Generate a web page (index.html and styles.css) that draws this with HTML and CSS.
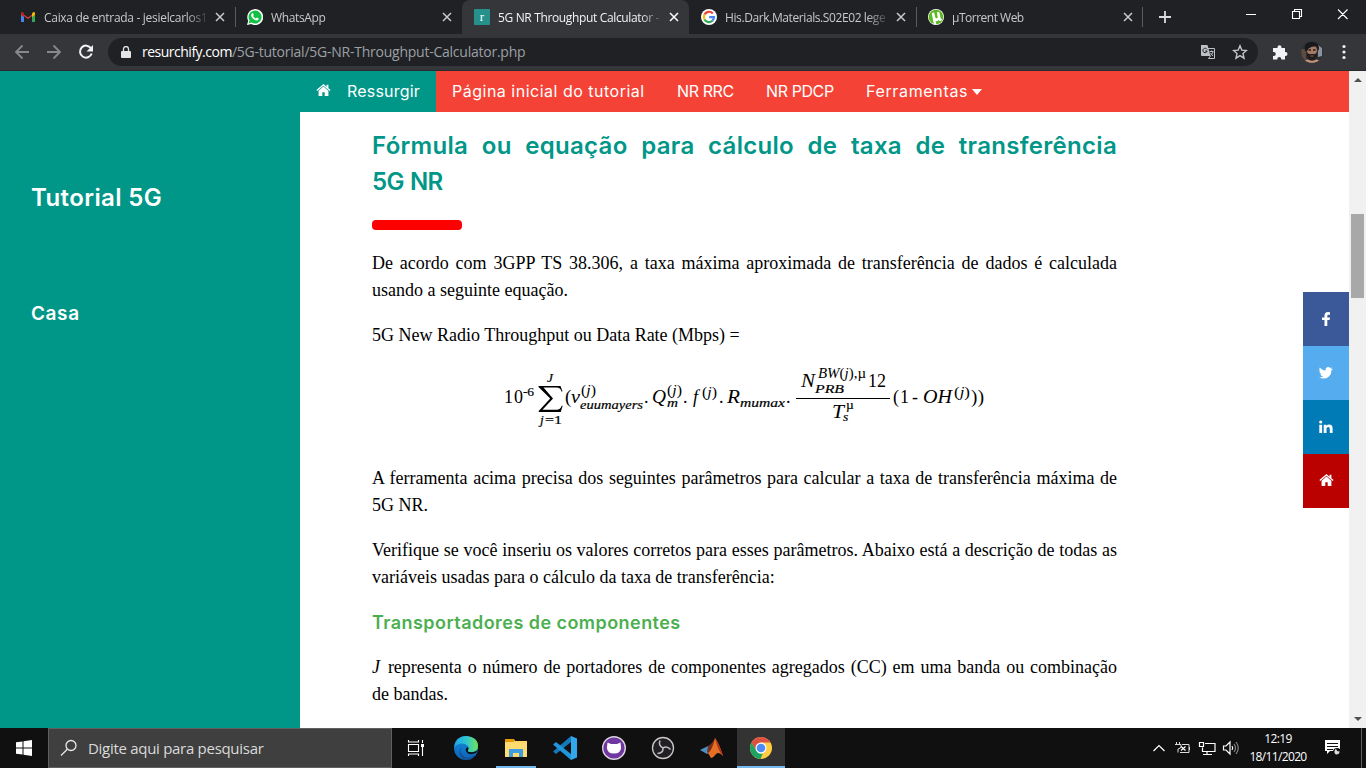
FILE: index.html
```html
<!DOCTYPE html>
<html lang="pt-BR">
<head>
<meta charset="utf-8">
<title>5G NR Throughput Calculator</title>
<link rel="stylesheet" href="styles.css">
</head>
<body>
<div class="screen">
  <header class="tabstrip">
    <div class="tab">
      <svg class="fav" viewBox="0 0 16 16"><path d="M1.500 4v9H4V7l4 3 4-3v6h2.500V4L8 8.500z" fill="#ea4335"/><path d="M1 4v9h3V6z" fill="#4285f4"/><path d="M12 6v7h3V4z" fill="#34a853"/><path d="M12 4.500V8l3-2.300V4q-1-2-3 .5z" fill="#fbbc04"/><path d="M1 4v1.700L4 8V4.500Q2 2 1 4z" fill="#c5221f"/></svg>
      <span class="title t1">Caixa de entrada - jesielcarlos1</span>
      <svg class="x" viewBox="0 0 10 10"><path d="M1 1l8 8M9 1L1 9"/></svg>
    </div>
    <div class="tab sep">
      <svg class="fav" viewBox="0 0 16 16"><path d="M0 16l1.200-4.200A8 8 0 1 1 4.300 15z" fill="#fff"/><path d="M1.600 14.400l.9-3a6.500 6.500 0 1 1 2.200 2.200z" fill="#12c143"/><path d="M5 4.200q.8-.6 1.200.2l.6 1.500-.7 1q1 1.900 2.800 2.600l.9-1 1.900 1q.2 1.800-1.700 2-3.400-.1-5.700-4Q3.700 5.700 5 4.200z" fill="#fff"/></svg>
      <span class="title t2">WhatsApp</span>
      <svg class="x" viewBox="0 0 10 10"><path d="M1 1l8 8M9 1L1 9"/></svg>
    </div>
    <div class="tab active">
      <span class="fav fav-r">r</span>
      <span class="title t3">5G NR Throughput Calculator -</span>
      <svg class="x" viewBox="0 0 10 10"><path d="M1 1l8 8M9 1L1 9"/></svg>
    </div>
    <div class="tab">
      <svg class="fav" viewBox="0 0 16 16"><circle cx="8" cy="8" r="8" fill="#fff"/><g fill="none" stroke-width="2.200"><path d="M11.800 4.400A5.100 5.100 0 0 0 3.500 5.600" stroke="#ea4335"/><path d="M3.500 5.600a5.100 5.100 0 0 0 0 4.900" stroke="#fbbc05"/><path d="M3.500 10.500a5.100 5.100 0 0 0 7.900 1.300" stroke="#34a853"/><path d="M11.400 11.800Q13 10.200 13 8.100H8.200" stroke="#4285f4"/></g></svg>
      <span class="title t4">His.Dark.Materials.S02E02 lege</span>
      <svg class="x" viewBox="0 0 10 10"><path d="M1 1l8 8M9 1L1 9"/></svg>
    </div>
    <div class="tab sep last">
      <svg class="fav" viewBox="0 0 16 16"><circle cx="8" cy="8" r="8" fill="#fff"/><circle cx="8" cy="8" r="7.300" fill="#5cb821"/><path d="M3.700 4l2.500-.5 1 4.500q.4 1.700 1.800 1.200.9-.4.600-1.800L8.800 3.200l2.400-.5L12.600 9q.3 1.300 1.500.8l-.8 2q-1.800.8-2.700-.7-1 1.500-3 1.200l.7 3-2.400.1z" fill="#fff"/></svg>
      <span class="title t5">µTorrent Web</span>
      <svg class="x" viewBox="0 0 10 10"><path d="M1 1l8 8M9 1L1 9"/></svg>
    </div>
    <svg class="plus" viewBox="0 0 12 12"><path d="M6 0v12M0 6h12"/></svg>
    <svg class="winctl" viewBox="-1 0 140 34"><path d="M19 14.500h10M65.500 11.500h7v7h-7zM67.500 11.500v-2h7v7h-2M111 9.500l9.500 9.500M120.500 9.500l-9.500 9.500"/></svg>
  </header>
  <div class="toolbar">
    <svg class="navicons" viewBox="0 0 108 36"><g fill="none" stroke-width="1.800"><path d="M29 18H16.500M22.500 11.500L16 18l6.500 6.500M47 18h12.500M53.500 11.500L60 18l-6.500 6.500" stroke="#87888b"/><path d="M91 14.300a6 6 0 1 0 .7 5.200" stroke="#f1f3f4" stroke-width="2"/></g><path d="M93 11v6.500h-6.500z" fill="#f1f3f4"/></svg>
    <div class="omnibox">
      <svg class="lock" viewBox="0 0 10 12"><path d="M1 5h8q1 0 1 1v5q0 1-1 1H1q-1 0-1-1V6q0-1 1-1z" fill="#e3e4e6"/><path d="M2.500 5V3a2.500 2.500 0 0 1 5 0v2" fill="none" stroke="#e3e4e6" stroke-width="1.300"/></svg>
      <span class="url"><span class="host">resurchify.com</span><span class="path">/5G-tutorial/5G-NR-Throughput-Calculator.php</span></span>
      <svg class="translate" viewBox="0 0 16 16"><path d="M6 4.500h8.500v10H8.500" fill="none" stroke="#bdc1c6"/><path d="M1 1h6.500l3 11H2q-1 0-1-1z" fill="#bdc1c6"/><path d="M7 5.400A2.200 2.200 0 1 0 7.200 7H5.200" stroke="#202124" fill="none"/><path d="M9.500 7.500h4M11.500 6.500v1M13 8q-.5 2-2.500 3.500M10.500 9l2.500 3M10.500 12l-2 2.500" fill="none" stroke="#bdc1c6"/></svg>
      <svg class="star" viewBox="0 0 16 16"><path d="M8 1.800l1.800 4.300 4.700.4L11 9.600l1 4.600-4-2.500-4 2.500 1-4.600-3.500-3.100 4.700-.4z" fill="none" stroke="#c4c6c9" stroke-width="1.400"/></svg>
    </div>
    <svg class="ext" viewBox="0 0 16 16"><path d="M1.500 4h4v-.7a2 2 0 0 1 4 0V4H13v4h.5a2 2 0 0 1 0 4H13v3.500H9.300V15a2 2 0 0 0-4 0v.5H1V12h.8a2 2 0 0 0 0-4H1V4z" fill="#f1f3f4"/></svg>
    <svg class="avatar" viewBox="0 0 22 22"><defs><clipPath id="round"><circle cx="11" cy="11" r="10.800"/></clipPath></defs><g clip-path="url(#round)"><path fill="#2c3035" d="M0 0h22v22H0z"/><path d="M17 4l4 3v8l-4 1z" fill="#8b939e"/><path d="M0 8h5v11H0z" fill="#5d4b40"/><ellipse cx="11" cy="9.500" rx="5" ry="6.500" fill="#a77b62"/><path d="M4 10Q2 1 11 1q8 0 7 9-2-4-3-4.500Q8 5 6 10z" fill="#16181b"/><path d="M6 11q1 2.500 3 2h4q2 .5 3-2 1 8-5 8.500-6-.5-5-8.500z" fill="#221e1d"/><path d="M7.500 9h2.500M12 9h2.500" stroke="#241c1a" stroke-width="1.300"/><path d="M9.500 15h3" stroke="#8d6152"/><path d="M2 22q2-4 5-3.500 4 2.500 8 0 4 0 5 3.500z" fill="#c69476"/></g></svg>
    <svg class="dots" viewBox="0 0 4 16"><circle cx="2" cy="2.500" r="1.600"/><circle cx="2" cy="8" r="1.600"/><circle cx="2" cy="13.500" r="1.600"/></svg>
  </div>
  <div class="viewport">
    <aside class="sidebar"><h2>Tutorial 5G</h2><h3>Casa</h3></aside>
    <main class="page">
      <nav class="menu">
        <a class="home"><svg viewBox="0 0 16 14"><path d="M8 2.700L2.700 7.300V13h4V9h2.600v4h4V7.300z"/><path d="M8 0L.3 6.500l1 1L8 1.900l6.700 5.600 1-1L13.300 4.500V.8h-2V2.900z"/></svg><span>Ressurgir</span></a>
        <a class="n1">Página inicial do tutorial</a><a class="n2">NR RRC</a><a class="n3">NR PDCP</a><a class="n4"><span>Ferramentas</span><i class="caret"></i></a>
      </nav>
      <article class="content">
        <h2 class="headline">Fórmula ou equação para cálculo de taxa de transferência <span class="short">5G NR</span></h2>
        <div class="rule"></div>
        <p>De acordo com 3GPP TS 38.306, a taxa máxima aproximada de transferência de dados é calculada usando a seguinte equação.</p>
        <p>5G New Radio Throughput ou Data Rate (Mbps) =</p>
        <svg class="formula" viewBox="372 349 745 98">
          <text x="504" y="403" textLength="19">10</text><text class="s" x="523" y="396" textLength="11">-6</text>
          <text class="i s" x="547" y="382">J</text>
          <path d="M538.500 386h22l2 5.500h-1q-1-4-5-4h-13l9.500 11-10.500 11.300h14q4 0 5.200-4h1l-2 6.200h-22v-1l11.500-12.500-11.700-11.500z"/>
          <text class="i s" x="540" y="424">j</text><text class="s" x="545" y="424" textLength="17" lengthAdjust="spacingAndGlyphs">=1</text>
          <text class="p" x="565" y="403">(</text><text class="i" x="571" y="403" textLength="9" lengthAdjust="spacingAndGlyphs">v</text>
          <text class="u" x="581" y="395" textLength="15" lengthAdjust="spacingAndGlyphs">(<tspan class="i">j</tspan>)</text>
          <text class="i s" x="580" y="409" textLength="63" lengthAdjust="spacingAndGlyphs">euumayers</text><text x="644" y="403">.</text>
          <text class="i" x="652" y="403" textLength="14" lengthAdjust="spacingAndGlyphs">Q</text><text class="u" x="667" y="395" textLength="15" lengthAdjust="spacingAndGlyphs">(<tspan class="i">j</tspan>)</text><text class="i s" x="667" y="407" textLength="11" lengthAdjust="spacingAndGlyphs">m</text><text x="683" y="403">.</text>
          <text class="i" x="693" y="403">f</text><text class="u" x="702" y="397" textLength="15" lengthAdjust="spacingAndGlyphs">(<tspan class="i">j</tspan>)</text><text x="719" y="403">.</text>
          <text class="i" x="727" y="403" textLength="13" lengthAdjust="spacingAndGlyphs">R</text><text class="i s" x="740" y="407" textLength="45" lengthAdjust="spacingAndGlyphs">mumax</text><text x="786" y="403">.</text>
          <text class="i" x="801" y="387" textLength="14" lengthAdjust="spacingAndGlyphs">N</text><text class="u" x="818" y="378" textLength="48" lengthAdjust="spacingAndGlyphs"><tspan class="i">BW</tspan>(<tspan class="i">j</tspan>),µ</text><text class="i s" x="815" y="393" textLength="29" lengthAdjust="spacingAndGlyphs">PRB</text><text x="868" y="387" textLength="18">12</text>
          <path d="M796 398h94v1h-94z"/>
          <text class="i" x="832" y="418" textLength="12" lengthAdjust="spacingAndGlyphs">T</text><text class="s" x="846" y="409">µ</text><text class="i s" x="843" y="421">s</text>
          <text x="893" y="403" textLength="16">(1</text><text x="912" y="403">-</text><text class="i" x="923" y="403" textLength="29" lengthAdjust="spacingAndGlyphs">OH</text><text class="u" x="954" y="397" textLength="16" lengthAdjust="spacingAndGlyphs">(<tspan class="i">j</tspan>)</text><text class="p" x="971" y="403" textLength="13">))</text>
        </svg>
        <p>A ferramenta acima precisa dos seguintes parâmetros para calcular a taxa de transferência máxima de 5G NR.</p>
        <p>Verifique se você inseriu os valores corretos para esses parâmetros. Abaixo está a descrição de todas as variáveis usadas para o cálculo da taxa de transferência:</p>
        <h3>Transportadores de componentes</h3>
        <p><em>J</em> representa o número de portadores de componentes agregados (CC) em uma banda ou combinação de bandas.</p>
      </article>
    </main>
    <div class="social">
      <a class="fb"><svg viewBox="0 0 16 16"><path d="M12 1.200v2.500h-1.500q-1.200 0-1.200 1.100v1.600H12l-.4 2.500H9.300V15H6.500V8.900H4V6.400h2.500V4.500Q6.500 1 10 1z"/></svg></a>
      <a class="tw"><svg viewBox="0 0 16 16"><path d="M15 3.700q-.6.900-1.500 1.500.1 4-2.800 6.500Q6.500 15 1 12.400q2.500.1 4-1.200-2-.2-2.700-2l1.200-.1Q1.400 8.400 1.300 6.100l1.200.3Q.5 4.800 1.700 2.500q2.400 2.900 5.900 3-.5-2.300 1.400-3.300 1.700-.7 3.200.7l1.800-.7-1.200 1.700z"/></svg></a>
      <a class="li"><svg viewBox="0 0 16 16"><path d="M1.300 5.800h2.800V14H1.300zM5.700 5.800h2.700V7q.9-1.400 2.700-1.400 3.500 0 3.500 4V14h-2.800v-4q0-2-1.500-2-1.800 0-1.800 2v4H5.700z"/><circle cx="2.700" cy="3" r="1.600"/></svg></a>
      <a class="hm"><svg viewBox="0 0 16 14"><path d="M8 2.700L2.700 7.300V13h4V9h2.600v4h4V7.300z"/><path d="M8 0L.3 6.500l1 1L8 1.900l6.700 5.600 1-1L13.300 4.500V.8h-2V2.900z"/></svg></a>
    </div>
    <div class="scrollbar"><i class="up"></i><i class="thumb"></i><i class="down"></i></div>
  </div>
  <footer class="taskbar">
    <div class="start"><svg viewBox="0 0 16 16"><path d="M0 2.300l6.500-.9v6.100H0zM7.500 1.200L16 0v7.500H7.500zM0 8.500h6.500v6.100L0 13.700zM7.500 8.500H16V16l-8.500-1.200z"/></svg></div>
    <div class="search"><svg viewBox="0 0 18 18"><circle cx="11" cy="6.500" r="5"/><path d="M7.300 10.200L1 16.500"/></svg><span>Digite aqui para pesquisar</span></div>
    <div class="app"><svg viewBox="0 0 24 24"><g fill="none" stroke="#fff" stroke-width="1.100"><path d="M4.500 8.500h10v7h-10zM4.500 4v2h10V4M4.500 20v-2h10v2M18.500 4v3M18.500 11v9"/></g><path d="M17 8h3v3h-3z" fill="#fff"/></svg></div>
    <div class="app edge"><svg viewBox="0 0 24 24"><defs><linearGradient id="eg"><stop offset="0" stop-color="#1fa4e8"/><stop offset=".5" stop-color="#2dc4d4"/><stop offset="1" stop-color="#70e356"/></linearGradient><linearGradient id="eb" x2="0" y2="1"><stop offset="0" stop-color="#168ddb"/><stop offset="1" stop-color="#0c62b8"/></linearGradient></defs><circle cx="12" cy="12" r="12" fill="url(#eb)"/><path d="M0 11Q2 0 12 0q12 1 12 10 0 6-7 6-4 0-3-2 2-4-3-6Q5 6 0 11z" fill="url(#eg)"/><path d="M8 10q-4 7 3 11 5 2 10-2-5 8-13 3-5-5 0-12z" fill="#155091"/><path d="M14 11q-3 1-2 4 2 5 10 2l2-4q-3 4-8 3-3 0-2-2 1-1 0-3z" fill="#111"/></svg></div>
    <div class="app running"><svg viewBox="0 0 24 24"><path d="M1 3h9l1 2h12v16H1z" fill="#ffd567"/><path d="M1 3h9v3H1z" fill="#e69b00"/><path d="M1 7h22v13H1z" fill="#ffdc72"/><path d="M5 13h14v8h-4v-4H9v4H5z" fill="#3f9cde"/></svg></div>
    <div class="app"><svg viewBox="0 0 24 24"><path d="M18 0v6L3 18l-3-2.500z" fill="#1478bb"/><path d="M18 24v-6L3 6 0 8.500z" fill="#2195dc"/><path d="M18 0l6 2.500v19L18 24z" fill="#33a7ed"/></svg></div>
    <div class="app"><svg viewBox="0 0 24 24"><circle cx="12" cy="12" r="11.300" fill="#7037a0" stroke="#ddd4e1" stroke-width="1.400"/><path d="M5.500 6.500l3.500 1.500h6l3.500-1.500.6 5.500q-.5 5.500-7.100 5.500T4.900 12z" fill="#fff"/></svg></div>
    <div class="app"><svg viewBox="0 0 24 24"><circle cx="12" cy="12" r="10.500" fill="#211f24" stroke="#c8c8c8" stroke-width="1.300"/><g fill="none" stroke="#bdbdbd" stroke-width="1.500"><path d="M9 4.500q-2 5 3 7.500M12 12q4-2.500 7.500 1.500M12 12q.5 5-5.500 5.500"/></g></svg></div>
    <div class="app"><svg viewBox="0 0 24 24"><path d="M0 14l8-4 4 4-5 4z" fill="#4a91bf"/><path d="M8 10q4-2 7-8l-1 12-5 4-2-2z" fill="#792e22"/><path d="M15 2q4 5 8 18-4-5-7-2-3 4-5 4l-3-5q4-2 7-15z" fill="#e56f22"/><path d="M15 2q4 5 8 18-5-5-8-18z" fill="#b4311d"/></svg></div>
    <div class="app chrome"><svg viewBox="0 0 24 24"><circle cx="12" cy="12" r="11" fill="#ffcd40"/><path d="M2.500 6.500A11 11 0 0 1 21.500 6.500H12L7.200 14.800z" fill="#dd5144"/><path d="M2.500 6.500l4.800 8.300q2 3.500 6.500 2.700L11.500 23A11 11 0 0 1 2.500 6.500z" fill="#1da462"/><circle cx="12" cy="12" r="5.500" fill="#fff"/><circle cx="12" cy="12" r="4.300" fill="#4c8bf5"/></svg></div>
    <div class="tray">
      <svg viewBox="0 0 92 24"><g fill="none" stroke="#fff" stroke-width="1.200"><path d="M3.500 15L9 9.500l5.500 5.500"/><path d="M26.500 6v3M29.500 6v3M25 8.500h6v2q0 2-3 2.500V16.500M32 8.500h7v8h-9M39.500 11v3" stroke="#ddd" stroke-width="1"/><path d="M31 10.500l4.500 4M35.500 10.500l-4.500 4"/><path d="M49.500 6.500h4v4h-4zM55 7.500h10v8H52.500v-4M57 15.500v3M53 18.500h9"/><path d="M73.500 10h2.500l4-4v12l-4-4h-2.500z"/><path d="M82 10q1.500 2 0 4"/><path d="M84 8q3 4 0 8M86 6q4.500 6 0 12" stroke="#858585"/></g></svg>
    </div>
    <div class="clock"><span class="time">12:19</span><span class="date">18/11/2020</span></div>
    <div class="notice"><svg viewBox="0 0 18 18"><path d="M1 1h15v11H6l-3 3v-3H1z" fill="#fff"/><path d="M3 4.500h11M3 7.500h11M3 10.500h6" stroke="#111" stroke-width="1.100"/><circle cx="13" cy="13" r="4" fill="#111"/><path d="M12 9.500q.5 3.500 4 3-1.200 3.500-4.500 2.800Q9 13 12 9.500z" fill="#ddd"/></svg></div>
  </footer>
</div>
</body>
</html>
```

FILE: styles.css
```css
* { box-sizing: border-box; }
body { margin: 0; background: #fff; }
svg { display: block; flex: none; }
.screen { width: 1366px; height: 768px; display: flex; flex-direction: column; overflow: hidden; font-family: "Open Sans", "Noto Sans", sans-serif; }
.tabstrip { height: 34px; flex: none; background: #202124; display: flex; align-items: center; padding-left: 8px; }
.tab { width: 227px; height: 34px; display: flex; align-items: center; padding: 0 9px 0 12px; color: #c6c9cd; font-size: 12px; }
.tab .fav { width: 16px; height: 16px; margin-right: 8px; flex: none; }
.fav-r { background: #26908a; color: #fff; font: 13px/15px "Liberation Serif", serif; text-align: center; border-radius: 1px; }
.title { width: 166px; flex: none; overflow: hidden; white-space: nowrap; -webkit-mask-image: linear-gradient(90deg, #000 142px, transparent 166px); mask-image: linear-gradient(90deg, #000 142px, transparent 166px); }
.x { width: 10px; height: 10px; margin-left: 5px; fill: none; stroke: #c9cbce; stroke-width: 1.500; }
.sep { background: linear-gradient(#5b5c60, #5b5c60) 0 50% / 1px 20px no-repeat; }
.last { background: linear-gradient(#5b5c60, #5b5c60) 0 50% / 1px 20px no-repeat, linear-gradient(#5b5c60, #5b5c60) 100% 50% / 1px 20px no-repeat; }
.active { background: #35363a; border-radius: 8px 8px 0 0; color: #f1f3f4; }
.active .x { stroke: #fff; }
.plus { width: 12px; height: 12px; margin-left: 16px; fill: none; stroke: #dadce0; stroke-width: 1.800; }
.winctl { width: 140px; height: 34px; margin-left: auto; fill: none; stroke: #fff; stroke-width: 1.100; }
.t1 { letter-spacing: -.3px; }
.t2 { letter-spacing: -.35px; }
.t3 { letter-spacing: -.35px; }
.t4 { letter-spacing: -.4px; }
.t5 { letter-spacing: -.5px; }
.toolbar { height: 37px; flex: none; background: #35363a; display: flex; align-items: center; border-bottom: 1px solid #292a2d; }
.navicons { width: 108px; height: 36px; }
.omnibox { width: 1150px; height: 28px; border-radius: 14px; background: #202124; display: flex; align-items: center; padding: 0 10px 0 13px; }
.lock { width: 10px; height: 12px; margin-right: 11px; }
.url { font-size: 14px; flex: 1; white-space: nowrap; padding-bottom: 1px; }
.host { color: #fff; letter-spacing: -.5px; }
.path { color: #9aa0a6; letter-spacing: -.24px; }
.translate { width: 16px; height: 16px; margin-right: 16px; }
.star { width: 16px; height: 16px; }
.ext { width: 16px; height: 16px; margin-left: 14px; }
.avatar { width: 22px; height: 22px; margin-left: 13px; }
.dots { width: 4px; height: 16px; margin-left: 19px; fill: #f1f3f4; }
.viewport { position: relative; height: 657px; flex: none; display: flex; background: #fff; }
.sidebar { width: 300px; background: #009688; color: #fff; padding: 109px 31px 0; font-family: Inter, sans-serif; }
.sidebar h2 { margin: 0; font-size: 24px; line-height: 36px; font-weight: 600; letter-spacing: .4px; }
.sidebar h3 { margin: 84px 0 0; font-size: 19px; line-height: 27px; font-weight: 600; letter-spacing: .6px; }
.page { width: 1049px; overflow: hidden; }
.menu { height: 41px; background: #f44336; color: #fff; display: flex; font: 16px/41px Inter, sans-serif; white-space: nowrap; }
.menu a { padding-left: 16px; flex: none; }
.menu .home { width: 136px; background: #009688; display: flex; align-items: center; gap: 16px; letter-spacing: .2px; }
.home svg { width: 15px; height: 13px; fill: #fff; margin-bottom: 3px; }
.n1 { width: 225px; letter-spacing: .5px; }
.n2 { width: 89px; letter-spacing: -.4px; }
.n3 { width: 100px; letter-spacing: -.4px; }
.menu .n4 { display: flex; align-items: center; gap: 4px; letter-spacing: .65px; }
.caret { border: 5px solid transparent; border-top: 6px solid #fff; border-bottom: 0; }
.content { width: 745px; margin-left: 72px; padding-top: 16px; font: 18px/27px "Liberation Serif", serif; color: #000; text-align: justify; }
.headline { margin: 0; font: 600 24px/36px Inter, sans-serif; color: #009688; letter-spacing: .3px; }
.short { letter-spacing: -.7px; word-spacing: 1px; white-space: nowrap; }
.rule { width: 90px; height: 10px; border-radius: 4px; background: #f00; margin: 20px 0; }
.content p { margin: 0 0 18px; }
.content em { font-size: 18px; padding-right: 2px; }
.content h3 { margin: 0 0 18px; font: 600 18px/27px Inter, sans-serif; color: #4caf50; letter-spacing: .45px; }
.formula { width: 745px; height: 98px; margin: -18px 0 18px; font-size: 18px; fill: #000; }
.formula .s { font-size: 13.500px; stroke: #000; stroke-width: .2px; }
.formula .u { font-size: 15px; }
.formula .p { font-size: 19px; }
.formula .i { font-style: italic; }
.social { position: absolute; left: 1303px; top: 221px; width: 46px; }
.social a { height: 54px; display: flex; align-items: center; justify-content: center; }
.social svg { width: 16px; height: 16px; fill: #fff; margin-bottom: 1px; }
.fb { background: #3b5998; }
.tw { background: #55acee; }
.li { background: #007bb5; }
.hm { background: #b00; }
.social .hm svg { width: 15px; height: 13px; }
.scrollbar { width: 17px; background: #f1f1f1; display: flex; flex-direction: column; align-items: center; padding: 7px 0; }
.thumb { width: 13px; height: 84px; background: #a8a8a8; margin-top: 132px; }
.up, .down { border: 4px solid transparent; }
.up { border-bottom-color: #505050; border-top: 0; }
.down { border-top-color: #505050; border-bottom: 0; margin-top: auto; }
.taskbar { height: 40px; flex: none; background: #101010; color: #fff; display: flex; }
.start { width: 48px; display: flex; align-items: center; justify-content: center; }
.start svg { width: 16px; height: 16px; fill: #fff; }
.search { width: 344px; background: #3f3f3f; border: 1px solid #606060; display: flex; align-items: center; padding-left: 11px; font-size: 15px; color: #dadada; }
.search svg { width: 18px; height: 18px; margin-right: 10px; fill: none; stroke: #e7e7e7; stroke-width: 1.300; }
.search span { letter-spacing: -.29px; white-space: nowrap; }
.app { width: 49px; display: flex; align-items: center; justify-content: center; padding-right: 2px; }
.app svg { width: 24px; height: 24px; }
.app:nth-child(3) { width: 48px; padding-right: 0; }
.edge { width: 53px; }
.running { width: 48px; background: linear-gradient(#76b9ed, #76b9ed) 3px 100% / 40px 2px no-repeat; }
.chrome { width: 48px; background: #333; border-bottom: 2px solid #76b9ed; padding: 2px 0 0; }
.tray { margin-left: auto; margin-right: -2px; display: flex; align-items: center; }
.tray svg { width: 92px; height: 24px; }
.clock { width: 76px; display: flex; flex-direction: column; align-items: center; font-size: 12px; line-height: 18px; padding-top: 2px; }
.time { letter-spacing: -.6px; }
.date { letter-spacing: -.65px; }
.notice { width: 46px; display: flex; align-items: center; padding-left: 8px; border-right: 1px solid #606060; margin-right: 4px; }
.notice svg { width: 18px; height: 18px; }
```
